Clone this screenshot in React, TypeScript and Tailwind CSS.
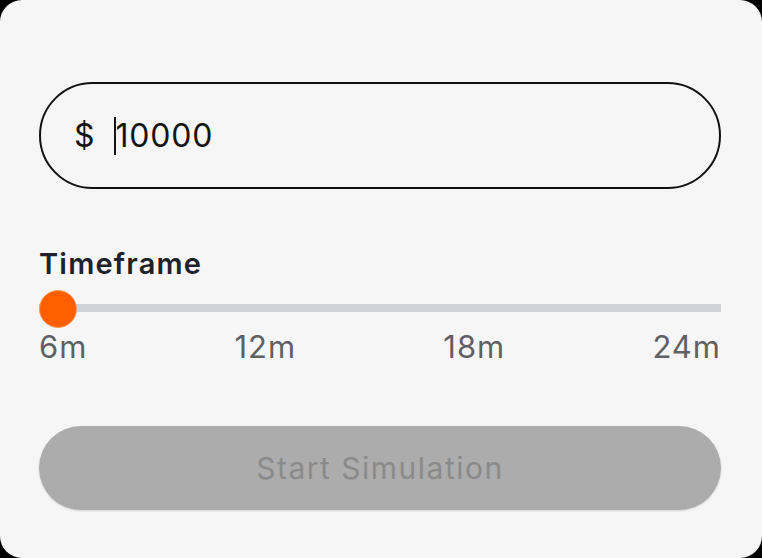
import { useState } from 'react';

const marks = ['6m', '12m', '18m', '24m'];

export default function App() {
  const [amount] = useState('10000');

  return (
    <div className="h-[558px] w-[762px] bg-black" style={{ fontFamily: 'Inter, "Noto Sans", sans-serif' }}>
      <div className="flex h-full flex-col rounded-[22px] bg-[#f6f6f6] pl-[39px] pr-[41px] pt-[82px]">
        {/* Amount input */}
        <div className="flex h-[107px] items-center rounded-full border-2 border-[#111] pl-[33px]">
          <span className="text-[32px] leading-none text-[#151515]">$</span>
          <span className="ml-[19px] h-[38px] w-[2px] bg-[#151515]" />
          <span className="text-[32px] leading-none tracking-[0.8px] text-[#151515]">{amount}</span>
        </div>

        {/* Timeframe */}
        <div className="mt-[60px] text-[29px] font-semibold leading-none tracking-[1.2px] text-[#1d222b]">Timeframe</div>

        <div className="relative mt-[12px] h-[38px]">
          <div className="absolute inset-x-0 top-[14px] h-[8px] bg-[#cfd2d6]" />
          <div className="absolute left-0 top-0 h-[38px] w-[38px] rounded-full border border-[#ff9a5c] bg-[#ff5f00]" />
        </div>

        <div className="mt-[3px] flex justify-between text-[31px] leading-none tracking-[1px] text-[#5f6062]">
          {marks.map((m) => (
            <span key={m}>{m}</span>
          ))}
        </div>

        {/* Action */}
        <button
          disabled
          className="mt-[64px] flex h-[84px] items-center justify-center rounded-full bg-[#acacac] text-[30px] tracking-[1.5px] text-[#8a8a8a] shadow-[0_1px_2px_rgba(0,0,0,0.15)]"
        >
          Start Simulation
        </button>
      </div>
    </div>
  );
}
